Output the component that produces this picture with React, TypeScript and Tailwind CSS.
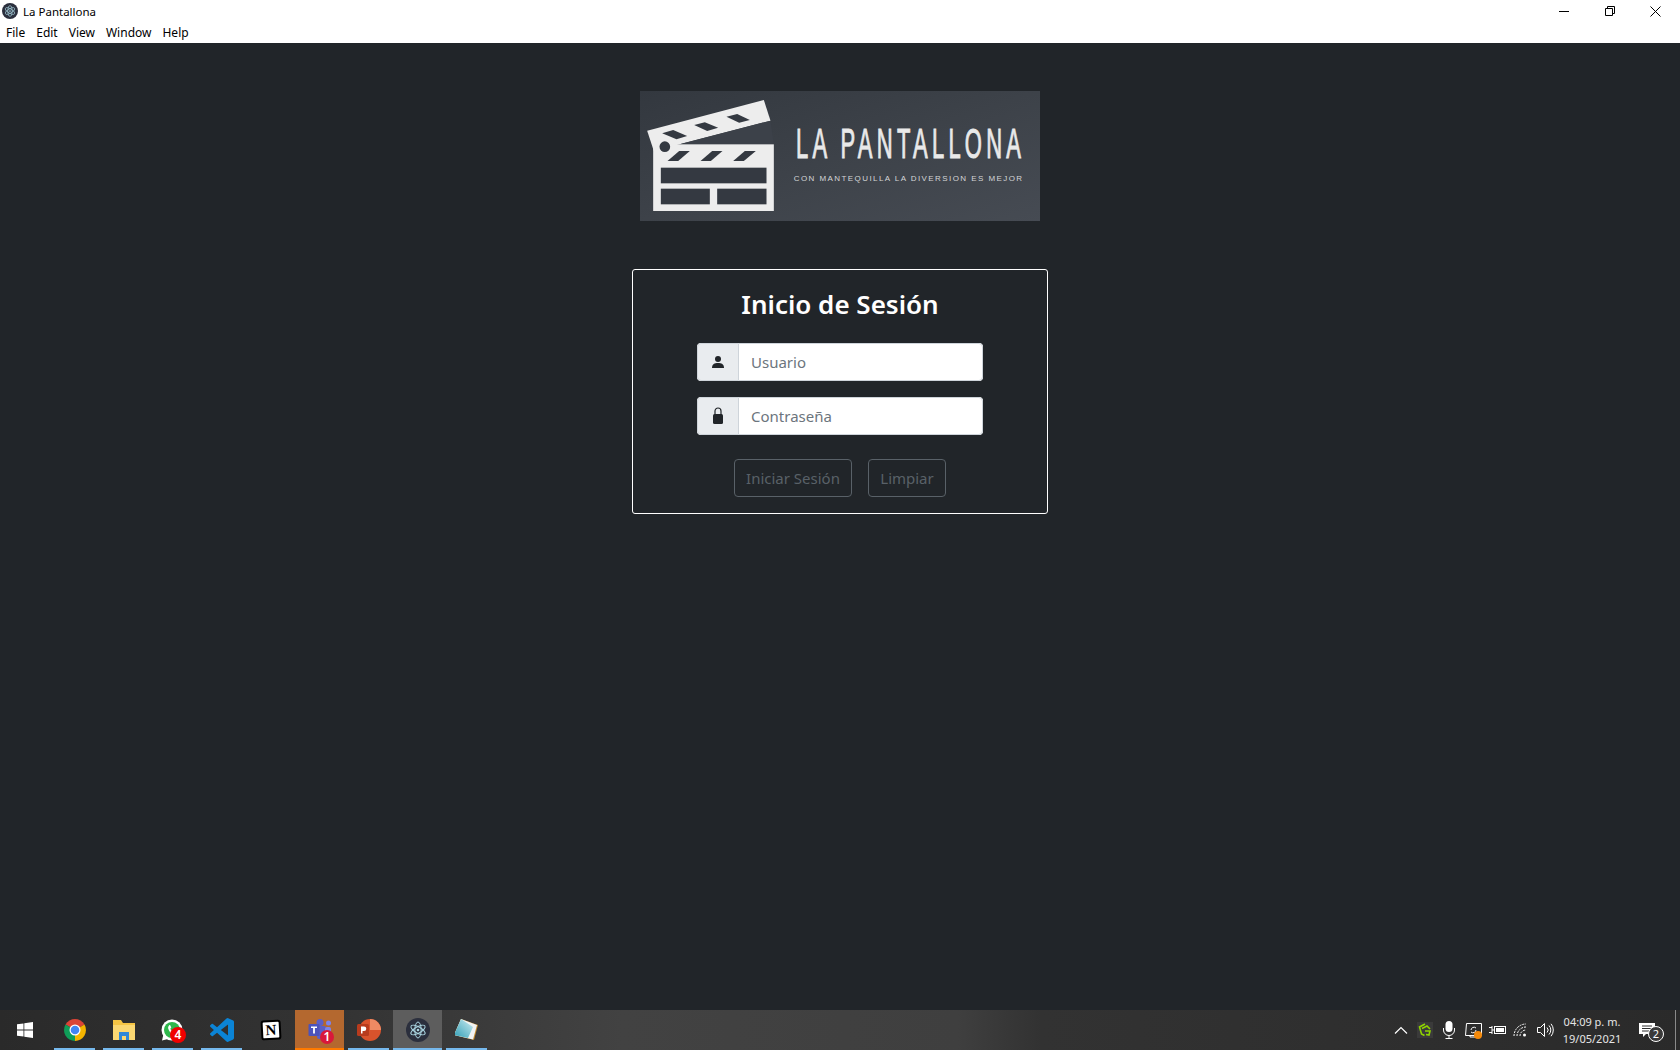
const uiFont = "[font-family:'Noto_Sans','Open_Sans',sans-serif]";

function ElectronIcon({ size }: { size: number }) {
  return (
    <svg width={size} height={size} viewBox="0 0 24 24" fill="none">
      <circle cx="12" cy="12" r="12" fill="#2b2f3d" />
      <g stroke="#a9d3df" strokeWidth="1">
        <ellipse cx="12" cy="12" rx="8" ry="3.2" transform="rotate(30 12 12)" />
        <ellipse cx="12" cy="12" rx="8" ry="3.2" transform="rotate(90 12 12)" />
        <ellipse cx="12" cy="12" rx="8" ry="3.2" transform="rotate(150 12 12)" />
      </g>
      <circle cx="12" cy="12" r="1.3" fill="#a9d3df" />
    </svg>
  );
}

function Clapper() {
  return (
    <svg width="127" height="111" viewBox="52 60 380 333" className="shrink-0">
      <polygon points="52,152 402,60 422,122 72,213" fill="#ededed" />
      <polygon points="160,190 422,122 432,193 150,193" fill="#3c4149" />
      <rect x="70" y="193" width="362" height="200" fill="#ededed" />
      <circle cx="105" cy="200" r="16" fill="#343941" />
      <g fill="#343941">
        <polygon points="97,160 130,150 172,168 140,178" />
        <polygon points="193,135 225,127 265,143 232,153" />
        <polygon points="290,110 322,102 360,120 328,128" />
        <polygon points="113,243 148,213 180,213 145,243" />
        <polygon points="212,243 247,213 278,213 243,243" />
        <polygon points="310,243 345,213 378,213 342,243" />
        <rect x="93" y="263" width="317" height="47" />
        <rect x="93" y="326" width="147" height="47" />
        <rect x="262" y="326" width="148" height="47" />
      </g>
    </svg>
  );
}

function Logo() {
  return (
    <div className="flex h-[130px] w-[400px] items-start bg-gradient-to-br from-[#33383f] via-[#3d4249] to-[#464b53] pl-[7px] pt-[9px]">
      <Clapper />
      <div className="ml-[18px] flex flex-col items-center pt-[16px] text-[#e9e9e9]">
        <div className="origin-top scale-y-[1.9] whitespace-nowrap pl-[4px] font-['Liberation_Sans',sans-serif] text-[22px] leading-[30px] tracking-[4.25px] [-webkit-text-stroke:0.5px_#e9e9e9]">
          LA PANTALLONA
        </div>
        <div className="mt-[28px] whitespace-nowrap font-['Liberation_Sans',sans-serif] text-[8px] leading-[10px] tracking-[1.43px] text-[#d4d5d7]">
          CON MANTEQUILLA LA DIVERSION ES MEJOR
        </div>
      </div>
    </div>
  );
}

function TitleBar() {
  return (
    <div className={`flex h-[43px] shrink-0 justify-between bg-white text-black ${uiFont}`}>
      <div className="flex flex-col">
        <div className="flex h-[22px] items-center pl-[2px]">
          <ElectronIcon size={16} />
          <span className="ml-[5px] pt-[2px] text-[11.5px]">La Pantallona</span>
        </div>
        <div className="flex h-[21px] items-center gap-[11px] pl-[6px] text-[12px]">
          <span>File</span>
          <span>Edit</span>
          <span>View</span>
          <span>Window</span>
          <span>Help</span>
        </div>
      </div>
      <div className="flex h-[22px] items-center pr-[2px]">
        <div className="flex w-[46px] justify-center">
          <svg width="10" height="10" viewBox="0 0 10 10" stroke="#000" fill="none">
            <path d="M0 5.5h10" />
          </svg>
        </div>
        <div className="flex w-[45px] justify-center">
          <svg width="10" height="10" viewBox="0 0 10 10" stroke="#000" fill="none">
            <path d="M.5 2.5h7v7h-7z M2.5 2.5v-2h7v7h-2" />
          </svg>
        </div>
        <div className="flex w-[46px] justify-center">
          <svg width="11" height="11" viewBox="0 0 11 11" stroke="#000" fill="none">
            <path d="M.5.5l10 10M10.5.5l-10 10" />
          </svg>
        </div>
      </div>
    </div>
  );
}

function LoginField({ placeholder, icon }: { placeholder: string; icon: React.ReactNode }) {
  return (
    <div className="flex h-[38px] w-[286px] rounded-[4px] bg-white">
      <div className="flex w-[42px] shrink-0 items-center justify-center rounded-l-[4px] border border-[#ced4da] bg-[#e9ecef]">
        {icon}
      </div>
      <input
        placeholder={placeholder}
        className="-ml-px min-w-0 flex-1 rounded-r-[4px] border border-[#ced4da] bg-white px-[12px] text-[15px] text-[#212529] outline-none placeholder:text-[#6c757d]"
      />
    </div>
  );
}

function LoginCard() {
  return (
    <div className={`mt-[48px] flex w-[416px] flex-col items-center rounded-[3px] border border-white pb-[16px] pt-[17px] ${uiFont}`}>
      <h1 className="text-[26px] font-semibold leading-[34px] text-white">Inicio de Sesión</h1>
      <div className="mt-[22px] flex flex-col gap-[16px]">
        <LoginField
          placeholder="Usuario"
          icon={
            <svg width="14" height="14" viewBox="0 0 14 14" fill="#212529">
              <circle cx="7" cy="4" r="3" />
              <path d="M1 13c0-4 2.500-5 6-5s6 1 6 5z" />
            </svg>
          }
        />
        <LoginField
          placeholder="Contraseña"
          icon={
            <svg width="12" height="18" viewBox="0 0 12 18" fill="#212529">
              <path d="M3 8V4a3 3 0 0 1 6 0v4" fill="none" stroke="#212529" strokeWidth="1.2" />
              <rect x="1" y="7" width="10" height="10" rx="1.500" />
            </svg>
          }
        />
      </div>
      <div className="mt-[24px] flex gap-[16px] opacity-75">
        <button className="h-[38px] w-[118px] rounded-[4px] border border-[#6c757d] text-[15px] text-[#6c757d]">
          Iniciar Sesión
        </button>
        <button className="h-[38px] w-[78px] rounded-[4px] border border-[#6c757d] text-[15px] text-[#6c757d]">
          Limpiar
        </button>
      </div>
    </div>
  );
}

function TaskItem({
  children,
  active,
  bar = "bg-[#76b9ed]",
  bg = "",
}: {
  children: React.ReactNode;
  active?: boolean;
  bar?: string;
  bg?: string;
}) {
  return (
    <div className={`relative flex h-full w-[49px] items-center justify-center ${bg}`}>
      {children}
      <div className={`absolute bottom-0 h-[2px] ${active ? "inset-x-0" : "inset-x-[4px]"} ${bar}`} />
    </div>
  );
}

function Badge({ n, cls }: { n: string; cls: string }) {
  return (
    <span
      className={`absolute flex items-center justify-center rounded-full text-[12px] font-semibold leading-none text-white ${cls}`}
    >
      {n}
    </span>
  );
}

function Taskbar() {
  return (
    <div className={`flex h-[40px] shrink-0 bg-[linear-gradient(90deg,#2a2a2a_0%,#333333_20%,#424242_37%,#3f3f3f_57%,#323232_62%,#2e2e2e_85%,#2a2a2a_100%)] text-white ${uiFont}`}>
      <div className="flex w-[50px] items-center justify-center">
        <svg width="16" height="16" viewBox="0 0 16 16" fill="#fff">
          <path d="M0 2.300l6.500-.9v6.200H0zM7.300 1.300L16 0v7.600H7.300zM0 8.400h6.500v6.200L0 13.700zM7.300 8.400H16V16l-8.700-1.300z" />
        </svg>
      </div>
      <TaskItem>
        <svg width="24" height="24" viewBox="0 0 24 24">
          <path d="M12 12L2.500 6.500A11 11 0 0 1 21.500 6.500Z" fill="#db4437" />
          <path d="M12 12L21.500 6.500A11 11 0 0 1 12 23Z" fill="#f4b400" />
          <path d="M12 12L12 23A11 11 0 0 1 2.500 6.500Z" fill="#0f9d58" />
          <circle cx="12" cy="12" r="5.500" fill="#fff" />
          <circle cx="12" cy="12" r="4.300" fill="#4285f4" />
        </svg>
      </TaskItem>
      <TaskItem>
        <svg width="24" height="22" viewBox="0 0 24 22">
          <path d="M1 1h8l2 3h12v17H1z" fill="#f6c544" />
          <rect x="1" y="6" width="22" height="15" fill="#fbd872" />
          <path d="M7 21v-8h10v8h-3v-4h-4v4z" fill="#2f88d8" />
        </svg>
      </TaskItem>
      <TaskItem>
        <svg width="22" height="22" viewBox="0 0 22 22" className="-translate-x-[1px]">
          <circle cx="11" cy="11" r="10.500" fill="#fff" />
          <polygon points="1,21.500 2.500,15 7,20" fill="#fff" />
          <circle cx="11" cy="11" r="8" fill="#2fb74c" />
          <path d="M7.800 6.300l1.300-.3 1.200 2.500-1 1.200c.6 1.500 1.600 2.500 3.100 3.100l1.200-1 2.400 1.200-.3 1.300c-.4 1-1.500 1.500-2.500 1.200-3-.8-5.300-3.100-6-6.100-.2-1 .2-2.300 1-3.100z" fill="#fff" />
        </svg>
        <Badge n="4" cls="left-[22px] top-[17px] h-[16px] w-[16px] bg-[#f00000]" />
      </TaskItem>
      <TaskItem>
        <svg width="24" height="24" viewBox="0 0 24 24" fill="#0b84d6">
          <path d="M23.15 2.587L18.21.21a1.494 1.494 0 0 0-1.705.29l-9.46 8.63-4.12-3.128a.999.999 0 0 0-1.276.057L.327 7.261A1 1 0 0 0 .326 8.74L3.899 12 .326 15.26a1 1 0 0 0 .001 1.479L1.65 17.94a.999.999 0 0 0 1.276.057l4.12-3.128 9.46 8.63a1.492 1.492 0 0 0 1.704.29l4.942-2.377A1.5 1.5 0 0 0 24 20.06V3.939a1.5 1.5 0 0 0-.85-1.352zm-5.146 14.861L10.826 12l7.178-5.448v10.896z" />
        </svg>
      </TaskItem>
      <TaskItem bar="bg-transparent">
        <div className="flex h-[20px] w-[20px] -rotate-3 items-center justify-center rounded-[3px] border-2 border-black bg-white font-['Liberation_Serif',serif] text-[15px] font-bold leading-none text-black">
          N
        </div>
      </TaskItem>
      <TaskItem active bar="bg-[#ff7a00]" bg="bg-[#b4682f]">
        <svg width="26" height="24" viewBox="0 0 26 24">
          <circle cx="13" cy="4.500" r="3.500" fill="#5b5fc7" />
          <circle cx="21.500" cy="5" r="2.500" fill="#7b83eb" />
          <rect x="10" y="8" width="9" height="13" rx="2" fill="#5b5fc7" />
          <rect x="18" y="9" width="6" height="8" rx="2" fill="#7b83eb" />
          <rect x="1.500" y="6" width="11" height="12" rx="1" fill="#4b53bc" />
          <path d="M4 8.500h6v1.600H7.900V15.500H6.100v-5.400H4z" fill="#fff" />
        </svg>
        <Badge n="1" cls="left-[25px] top-[20px] h-[14px] w-[14px] bg-[#d9183b]" />
      </TaskItem>
      <TaskItem>
        <svg width="25" height="24" viewBox="0 0 25 24">
          <circle cx="14" cy="12" r="11" fill="#d9532c" />
          <path d="M14 12V1a11 11 0 0 1 11 11z" fill="#ee8a63" />
          <rect x="1" y="6" width="12" height="12" rx="1.500" fill="#b83b1d" />
          <path d="M5 8.500h3a2.300 2.300 0 0 1 0 4.600H6.500v2.500H5z" fill="#fff" />
        </svg>
      </TaskItem>
      <TaskItem active bg="bg-[#5d5d5d]">
        <ElectronIcon size={24} />
      </TaskItem>
      <TaskItem>
        <svg width="24" height="24" viewBox="0 0 24 24">
          <defs>
            <linearGradient id="notepadCover" x1="0" y1="1" x2="1" y2="0">
              <stop offset="0" stopColor="#2f9db5" />
              <stop offset="1" stopColor="#cfeef2" />
            </linearGradient>
          </defs>
          <polygon points="6,1 23,7 19,22 -1,17" fill="#c28a2e" />
          <polygon points="6,1 22,7 18,21.500 -1,17" fill="#f1f3f3" />
          <polygon points="6,1 18,9 13,20 -1,17" fill="url(#notepadCover)" />
        </svg>
      </TaskItem>

      <div className="ml-auto flex h-full items-center">
        <TrayIcon>
          <svg width="14" height="8" viewBox="0 0 14 8" fill="none" stroke="#fff" strokeWidth="1.200">
            <path d="M1 7.500l6-6 6 6" />
          </svg>
        </TrayIcon>
        <TrayIcon>
          <div className="flex h-[16px] w-[16px] items-center justify-center bg-[#3a3a3a]">
            <svg width="14" height="14" viewBox="0 0 14 14" fill="none" stroke="#8fd400" strokeWidth="1.600">
              <path d="M7 1L1.500 4l2 7 3 1.500M4 5.500L9 3l3 3M7 8h5l-1 4-3-.5" />
            </svg>
          </div>
        </TrayIcon>
        <TrayIcon>
          <svg width="14" height="18" viewBox="0 0 14 18" fill="none" stroke="#fff">
            <rect x="3.500" y="0" width="7" height="11" rx="3.500" fill="#fff" stroke="none" />
            <path d="M1.500 7v2a5.500 5.500 0 0 0 11 0V7M7 14.500V17.500M3.500 17.500h7" />
          </svg>
        </TrayIcon>
        <TrayIcon>
          <div className="relative">
            <svg width="17" height="15" viewBox="0 0 17 15" fill="none" stroke="#fff">
              <path d="M1.500.5h15v12h-16zM5 12.500V14h7" />
              <path d="M6 7a3 3 0 0 1 5-2M11 7a3 3 0 0 1-5 2" />
            </svg>
            <span className="absolute left-[9px] top-[8px] h-[8px] w-[8px] rounded-full bg-[#f58a0b]" />
          </div>
        </TrayIcon>
        <TrayIcon>
          <svg width="17" height="12" viewBox="0 0 17 12" fill="none" stroke="#fff">
            <rect x="5.500" y="2.500" width="11" height="7" />
            <rect x="7" y="4" width="8" height="4" fill="#fff" stroke="none" />
            <path d="M0 3.500h3M0 8.500h3M3 2v8M3 6h2.500" />
          </svg>
        </TrayIcon>
        <TrayIcon>
          <svg width="16" height="14" viewBox="0 0 16 14" fill="none" stroke="#fff">
            <path d="M1 13A12 12 0 0 1 13 1M4 13A9 9 0 0 1 13 4M7 13a6 6 0 0 1 6-6" strokeDasharray="2 1" />
            <circle cx="11.500" cy="12" r="1.500" fill="#fff" stroke="none" />
          </svg>
        </TrayIcon>
        <TrayIcon>
          <svg width="17" height="14" viewBox="0 0 17 14" fill="none" stroke="#fff">
            <path d="M.5 4.500h3l4-4v13l-4-4h-3zM10 4.500a3.500 3.500 0 0 1 0 5M12 2.500a6.500 6.500 0 0 1 0 9M14 .8a9.500 9.500 0 0 1 0 12.400" />
          </svg>
        </TrayIcon>
        <div className="flex w-[70px] flex-col items-center text-[11px] leading-[17px] text-[#e6e6e6]">
          <span>04:09 p. m.</span>
          <span>19/05/2021</span>
        </div>
        <div className="relative flex w-[40px] items-center justify-center">
          <svg width="16" height="15" viewBox="0 0 16 15">
            <path d="M0 0h16v11H7l-3 3v-3H0z" fill="#fff" />
            <path d="M3 3h10M3 5.500h10M3 8h7" stroke="#2e2e2e" />
          </svg>
          <span className="absolute left-[21px] top-[3px] flex h-[16px] w-[16px] items-center justify-center rounded-full border border-white bg-[#3a3a3a] text-[11px] leading-none text-white">
            2
          </span>
        </div>
        <div className="flex h-full w-[13px] justify-start pl-[8px]">
          <div className="h-full w-px bg-[#8a8a8a]" />
        </div>
      </div>
    </div>
  );
}

function TrayIcon({ children }: { children: React.ReactNode }) {
  return <div className="flex w-[24px] items-center justify-center">{children}</div>;
}

export default function App() {
  return (
    <div className="flex h-screen flex-col overflow-hidden bg-[#212529]">
      <TitleBar />
      <main className="flex flex-1 flex-col items-center pt-[48px]">
        <Logo />
        <LoginCard />
      </main>
      <Taskbar />
    </div>
  );
}
